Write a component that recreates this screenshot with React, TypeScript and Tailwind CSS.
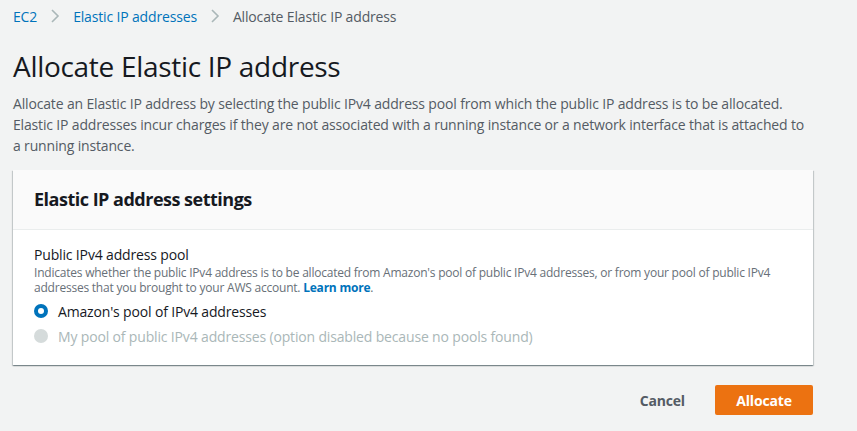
import React from 'react';

const Chevron = () => (
  <svg width="10" height="14" viewBox="0 0 10 14" className="mx-[13px]">
    <path d="M2 1l6 6-6 6" fill="none" stroke="#aab7b8" strokeWidth="1.6" />
  </svg>
);

export default function App() {
  return (
    <div className="min-h-[431px] bg-[#f2f3f3] px-[13px] pt-[6px] tracking-[-0.16px] text-[#16191f]" style={{ fontFamily: '"Open Sans", Arial, sans-serif' }}>
      <nav className="flex h-[20px] items-center text-[14px]">
        <span className="text-[#0073bb]">EC2</span>
        <Chevron />
        <span className="text-[#0073bb]">Elastic IP addresses</span>
        <Chevron />
        <span className="text-[#545b64]">Allocate Elastic IP address</span>
      </nav>

      <h1 className="mt-[22px] text-[28px] leading-[36px] font-normal tracking-[-0.3px]">Allocate Elastic IP address</h1>

      <p className="mt-[9px] max-w-[800px] text-[14px] leading-[21px] text-[#545b64]">
        Allocate an Elastic IP address by selecting the public IPv4 address pool from which the public IP address is to be allocated.
        Elastic IP addresses incur charges if they are not associated with a running instance or a network interface that is attached to
        a running instance.
      </p>

      <div className="mt-[14px] w-[800px] bg-white shadow-[0_1px_1px_0_rgba(0,28,36,0.3),1px_1px_1px_0_rgba(0,28,36,0.15),-1px_1px_1px_0_rgba(0,28,36,0.15)]">
        <div className="flex h-[60px] items-center border-b border-[#eaeded] bg-[#fafafa] px-[21px]">
          <h2 className="text-[18px] font-bold tracking-[-0.5px]">Elastic IP address settings</h2>
        </div>
        <div className="px-[21px] pt-[15px] pb-[17px]">
          <div className="text-[14px] leading-[20px]">Public IPv4 address pool</div>
          <div className="text-[12px] leading-[15px] tracking-[-0.22px] text-[#687078]">
            Indicates whether the public IPv4 address is to be allocated from Amazon's pool of public IPv4 addresses, or from your pool of public IPv4 addresses that you brought to your AWS account. <span className="font-bold text-[#0073bb]">Learn more</span>.
          </div>
          <label className="mt-[4px] flex h-[24px] items-center gap-[10px] text-[14px]">
            <span className="flex h-[14px] w-[14px] items-center justify-center rounded-full bg-[#0073bb]">
              <span className="h-[6px] w-[6px] rounded-full bg-white" />
            </span>
            Amazon's pool of IPv4 addresses
          </label>
          <label className="mt-[1px] flex h-[24px] items-center gap-[10px] text-[14px] text-[#aab7b8]">
            <span className="h-[14px] w-[14px] rounded-full bg-[#d5dbdb]" />
            My pool of public IPv4 addresses (option disabled because no pools found)
          </label>
        </div>
      </div>

      <div className="mt-[20px] flex w-[800px] items-center justify-end gap-[30px]">
        <button className="text-[14px] font-bold text-[#545b64]">Cancel</button>
        <button className="h-[30px] w-[98px] rounded-[2px] bg-[#ec7211] text-[14px] font-bold text-white">Allocate</button>
      </div>
    </div>
  );
}
